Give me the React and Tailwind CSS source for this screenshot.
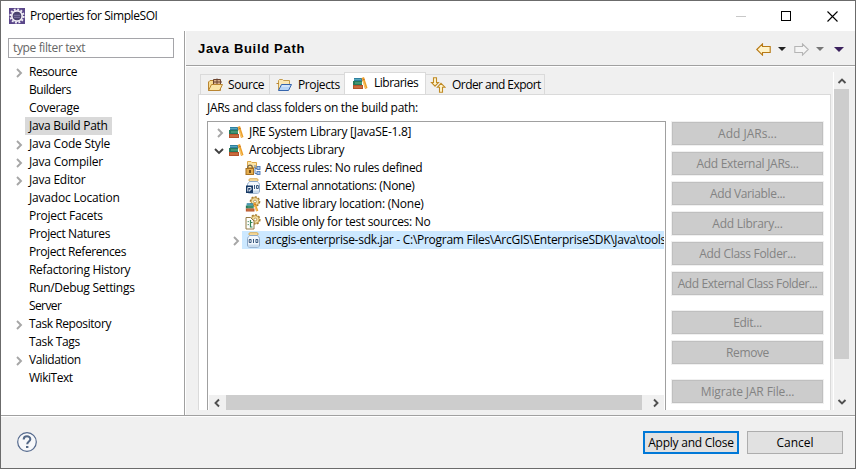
import React from "react";

const TREE = [
  { label: "Resource", open: true, fit: "tracking-[-0.48px]" },
  { label: "Builders", fit: "tracking-[-0.48px]" },
  { label: "Coverage", fit: "tracking-[-0.28px]" },
  { label: "Java Build Path", selected: true, fit: "tracking-[-0.28px]" },
  { label: "Java Code Style", open: true, fit: "tracking-[-0.22px]" },
  { label: "Java Compiler", open: true, fit: "tracking-[-0.2px]" },
  { label: "Java Editor", open: true, fit: "tracking-[-0.25px]" },
  { label: "Javadoc Location", fit: "tracking-[-0.2px]" },
  { label: "Project Facets", fit: "tracking-[-0.28px]" },
  { label: "Project Natures", fit: "tracking-[-0.4px]" },
  { label: "Project References", fit: "tracking-[-0.41px]" },
  { label: "Refactoring History", fit: "tracking-[-0.3px]" },
  { label: "Run/Debug Settings", fit: "tracking-[-0.29px]" },
  { label: "Server", fit: "tracking-[-0.6px]" },
  { label: "Task Repository", open: true, fit: "tracking-[-0.42px]" },
  { label: "Task Tags", fit: "tracking-[-0.35px]" },
  { label: "Validation", open: true, fit: "tracking-[-0.4px]" },
  { label: "WikiText", fit: "tracking-[-0.48px]" },
];

function Chevron({ className = "", d = "M2 1 L6 5 L2 9", color = "#a6a6a6", w = 8, h = 10 }) {
  return (
    <svg className={"shrink-0 " + className} width={w} height={h} viewBox={`0 0 ${w} ${h}`} fill="none" stroke={color} strokeWidth="1.9">
      <path d={d} />
    </svg>
  );
}

function Svg16({ children, className = "" }) {
  return (
    <svg className={"shrink-0 " + className} width="16" height="16" viewBox="0 0 16 16">
      {children}
    </svg>
  );
}

function BooksShapes() {
  return (
    <>
      <rect x="2" y="3" width="8" height="3" fill="#2f7f9f" />
      <path d="M2 4.5H9" stroke="#57a9bd" />
      <rect x="1" y="6" width="9" height="4" fill="#267a5c" />
      <path d="M3 8H10" stroke="#62b28b" />
      <rect x="1" y="10" width="10" height="4" fill="#b6522b" />
      <path d="M2 12H10" stroke="#dc8751" />
      <path d="M9.5 3L12 2L15.5 13L13 14Z" fill="#eea02c" />
      <path d="M10.5 4L13.5 13" stroke="#fbd580" strokeWidth=".8" />
      <path d="M10.2 5.2L12.7 4.3" stroke="#c36c1b" />
    </>
  );
}

function BooksIcon({ className }) {
  return <Svg16 className={className}><BooksShapes /></Svg16>;
}

function SourceIcon() {
  return (
    <Svg16>
      <path d="M1.5 13.5V5L3 3.5H6.5L8 5H13.5V13.5Z" fill="#f8dc93" stroke="#b98531" />
      <path d="M6.5 2.5H13.5V7.5H6.5Z" fill="#d9b28e" stroke="#6c4530" />
      <path d="M10 1.5V8M6 5H15" stroke="#6c4530" />
      <path d="M1.5 13.5L4.5 7.5H15.5L12.5 13.5Z" fill="#fbe5a8" stroke="#b98531" />
    </Svg16>
  );
}

function ProjectsIcon() {
  return (
    <Svg16>
      <path d="M2.5 13V3.5L3.5 2.5H6.5L7.5 3.5H13.5V8" fill="#fbe8b5" stroke="#c49c4c" />
      <path d="M.5 6.5H3" stroke="#b98531" />
      <path d="M2.5 13.5L5.5 7.5H15.5L12.5 13.5Z" fill="#b7d5f7" stroke="#3565ad" />
      <path d="M6 9H13.5" stroke="#e9f4ff" />
    </Svg16>
  );
}

function OrderIcon() {
  return (
    <Svg16>
      <path d="M3.5 .8H6.5V5.5H8.5L5 9.2L1.5 5.5H3.5Z" fill="#fff5d0" stroke="#c08a25" strokeWidth="1.1" />
      <path d="M9.5 15.2H12.5V10.2H15L11 6.3L7.4 10.2H9.5Z" fill="#fff5d0" stroke="#c08a25" strokeWidth="1.1" />
    </Svg16>
  );
}

function GearShape({ cx, cy }) {
  return (
    <>
      <circle cx={cx} cy={cy} r="4.5" fill="#ecd28b" stroke="#a47b2e" strokeWidth="1.6" strokeDasharray="2 1.4" />
      <circle cx={cx} cy={cy} r="3.8" fill="#f4e0a6" stroke="#b58b3d" strokeWidth=".7" />
      <circle cx={cx} cy={cy} r="1.4" fill="#fff" stroke="#a47b2e" strokeWidth=".7" />
    </>
  );
}

function AccessIcon() {
  return (
    <Svg16>
      <path d="M2.5 1.5H6L7 2.5H11.5V7.5H2.5Z" fill="#fce5a6" stroke="#dca84b" />
      <path d="M10 5V13.5H12M10 8.5H12" fill="none" stroke="#5c7fae" />
      <rect x="12" y="6.5" width="3" height="3" fill="#a9c8ef" stroke="#4f79b5" strokeWidth=".9" />
      <rect x="12" y="11.5" width="3" height="3" fill="#a9c8ef" stroke="#4f79b5" strokeWidth=".9" />
      <path d="M2.7 9V7.5C2.7 4.2 7.3 4.2 7.3 7.5V9" fill="none" stroke="#7c6847" strokeWidth="1.3" />
      <rect x="1" y="8.5" width="7.5" height="6" fill="#e3ad4f" stroke="#a8701f" />
      <rect x="4" y="10" width="2" height="3" fill="#76501e" />
    </Svg16>
  );
}

function JarShapes() {
  return (
    <>
      <rect x="4" y=".8" width="9" height="2.5" rx="1" fill="#fbe5ae" stroke="#d8a64b" />
      <path d="M4.5 3.5H12.5C13 5 14.5 5 14.5 6.5V13C14.5 14.5 13.5 15.3 12.5 15.3H4.5C3.5 15.3 2.5 14.5 2.5 13V6.5C2.5 5 4 5 4.5 3.5Z" fill="#f1f7fd" stroke="#8da9c8" />
      <path d="M3 12.5H14V14L12.5 15H4.5L3 14Z" fill="#c8dbed" />
    </>
  );
}

function JarIcon() {
  return (
    <Svg16>
      <JarShapes />
      <path d="M4.2 7.5H6.1V10.5H4.2ZM10.9 7.5H12.8V10.5H10.9ZM8.5 7V11" fill="none" stroke="#24466f" strokeWidth=".9" />
    </Svg16>
  );
}

function AnnotationIcon() {
  return (
    <Svg16>
      <JarShapes />
      <path d="M9.5 7V11M11.5 7.5H13.3V10.5H11.5Z" fill="none" stroke="#24466f" strokeWidth=".9" />
      <rect x="1" y="7.5" width="7" height="7.5" fill="#163965" />
      <path d="M2.8 13.5V9.5H6V12H4.3V13.5" fill="none" stroke="#fff" strokeWidth=".9" />
    </Svg16>
  );
}

function NativeIcon() {
  return (
    <Svg16>
      <GearShape cx={10} cy={5.5} />
      <g transform="translate(0 5) scale(.86 .75)"><BooksShapes /></g>
    </Svg16>
  );
}

function TestIcon() {
  return (
    <Svg16>
      <GearShape cx={10.3} cy={5.5} />
      <path d="M1 3.5H5.5L9 7V15H1Z" fill="#fff" stroke="#927b45" />
      <path d="M5.5 6V13H7.5M5.5 8.5H7.5" fill="none" stroke="#328351" strokeWidth="1.2" />
      <path d="M3.2 7V8.2M3.2 10V11.2" stroke="#328351" />
    </Svg16>
  );
}

function EclipseIcon() {
  return (
    <svg className="shrink-0" width="16" height="16" viewBox="0 0 16 16">
      <rect width="16" height="16" fill="#5b478a" />
      <circle cx="8" cy="8" r="6.6" fill="none" stroke="#f1eef6" strokeWidth="2" strokeDasharray="1.9 1.556" />
      <circle cx="8" cy="8" r="5.2" fill="#40345e" stroke="#f0edf5" strokeWidth="1.7" />
      <circle cx="8" cy="8" r="4" fill="#4b4470" />
      <path d="M4.8 7.3H11.2M5 9.3H11" stroke="#8f86b4" strokeWidth=".8" />
    </svg>
  );
}

function Triangle({ color }) {
  return <svg className="shrink-0" width="8" height="4" viewBox="0 0 8 4"><path d="M0 0H8L4 4Z" fill={color} /></svg>;
}

function NavArrow({ color, fill, flip }) {
  return (
    <svg className={"shrink-0 " + (flip ? "-scale-x-100" : "")} width="15" height="13" viewBox="0 0 15 13">
      <path d="M.8 6.5L6.5 .9V3.5H14.2V9.5H6.5V12.1Z" fill={fill} stroke={color} strokeWidth="1.1" />
    </svg>
  );
}

function TitleBar() {
  return (
    <div className="flex h-[30px] shrink-0 items-center bg-white pl-2">
      <EclipseIcon />
      <span className="ml-[5px] tracking-[-0.42px]">Properties for SimpleSOI</span>
      <div className="ml-auto flex h-full items-center pr-[17px]">
        <div className="h-px w-[10px] bg-[#c8c8c8]" />
        <div className="ml-[35px] h-[10px] w-[10px] border border-black" />
        <svg className="ml-9" width="11" height="11" viewBox="0 0 11 11" stroke="#000" strokeWidth="1.1"><path d="M.5 .5L10.5 10.5M10.5 .5L.5 10.5" /></svg>
      </div>
    </div>
  );
}

function Sidebar() {
  return (
    <div className="flex w-[184px] shrink-0 flex-col border-r border-[#a0a0a0] bg-white pl-[7px] pt-[7px]">
      <div className="flex h-5 w-[166px] shrink-0 items-center border border-[#a5a5a9] pl-1 text-[#666]">
        <span className="tracking-[-0.37px]">type filter text</span>
      </div>
      <div className="flex flex-col pt-[5px]">
        {TREE.map((n) => (
          <div key={n.label} className="flex h-[18px] items-center">
            <div className="w-[17px] pl-[7px] pt-0.5">{n.open && <Chevron />}</div>
            <span className={"flex h-[18px] items-center whitespace-nowrap px-1 " + n.fit + (n.selected ? " bg-[#d9d9d9]" : "")}>{n.label}</span>
          </div>
        ))}
      </div>
    </div>
  );
}

function Header() {
  return (
    <div className="flex h-[35px] shrink-0 items-center border-b border-[#a0a0a0] pl-3 pr-[11px] pt-[2px]">
      <h1 className="font-['Liberation_Sans'] text-[13px] font-bold tracking-[0.68px]">Java Build Path</h1>
      <div className="ml-auto flex items-center">
        <NavArrow color="#b87a16" fill="#fff3c9" />
        <div className="w-[7px]" />
        <Triangle color="#222" />
        <div className="w-2" />
        <NavArrow color="#b5b5b5" fill="#f5f5f5" flip />
        <div className="w-[7px]" />
        <Triangle color="#777" />
        <div className="w-[10px]" />
        <svg width="10" height="5" viewBox="0 0 10 5"><path d="M0 0H10L5 5Z" fill="#3b215d" /></svg>
      </div>
    </div>
  );
}

function Tab({ icon, label, className }) {
  return (
    <div className={"flex h-5 shrink-0 items-center whitespace-nowrap border-t border-[#dadada] " + className}>
      {icon}
      {label}
    </div>
  );
}

function Tabs() {
  return (
    <div className="flex h-[22px] shrink-0 items-end pl-[2px]">
      <Tab icon={<SourceIcon />} className="w-[70px] gap-[5px] border-x pl-1.5 tracking-[-0.4px]" label="Source" />
      <Tab icon={<ProjectsIcon />} className="w-[74px] gap-[6px] pl-1.5 tracking-[-0.38px]" label="Projects" />
      <div className="-mb-px flex h-[23px] w-[82px] shrink-0 items-center gap-[6px] border border-b-0 border-[#dadada] bg-white pb-[2px] pl-[7px] tracking-[-0.5px]">
        <BooksIcon />
        Libraries
      </div>
      <Tab icon={<OrderIcon />} className="w-[119px] gap-[6px] border-r pl-1 tracking-[-0.55px]" label="Order and Export" />
    </div>
  );
}

const CHILDREN = [
  { icon: <AccessIcon />, label: "Access rules: No rules defined", fit: "tracking-[-0.33px]" },
  { icon: <AnnotationIcon />, label: "External annotations: (None)", fit: "tracking-[-0.37px]" },
  { icon: <NativeIcon />, label: "Native library location: (None)", fit: "tracking-[-0.24px]" },
  { icon: <TestIcon />, label: "Visible only for test sources: No", fit: "tracking-[-0.3px]" },
];

function LibraryTree() {
  return (
    <div className="flex h-[289px] w-[459px] shrink-0 flex-col border-x border-t border-[#a0a0a0] bg-white px-px pt-px">
      <div className="flex h-[18px] items-center pl-[7px]">
        <Chevron className="mt-0.5" />
        <BooksIcon className="ml-1" />
        <span className="ml-[5px] tracking-[-0.27px]">JRE System Library [JavaSE-1.8]</span>
      </div>
      <div className="flex h-[18px] items-center pl-[5px]">
        <Chevron className="mt-px" d="M1 2 L5 6 L9 2" color="#404040" w={10} h={8} />
        <BooksIcon className="ml-1" />
        <span className="ml-[5px] tracking-[-0.3px]">Arcobjects Library</span>
      </div>
      {CHILDREN.map((c) => (
        <div key={c.label} className="flex h-[18px] items-center gap-1 whitespace-nowrap pl-9">
          {c.icon}
          <span className={c.fit}>{c.label}</span>
        </div>
      ))}
      <div className="flex h-[18px] items-center pl-[23px]">
        <Chevron className="mt-0.5" />
        <div className="ml-[2px] flex h-[18px] min-w-0 flex-1 items-center gap-1 overflow-hidden whitespace-nowrap bg-[#cce8ff] pl-[3px]">
          <JarIcon />
          <span className="tracking-[-0.27px]">arcgis-enterprise-sdk.jar - C:\Program Files\ArcGIS\EnterpriseSDK\Java\tools</span>
        </div>
      </div>
      <div className="mt-auto flex h-[15px] items-center bg-[#f0f0f0] pl-1 pr-[4px]">
        <Chevron d="M6 1.5 L2.5 5 L6 8.5" color="#505050" />
        <div className="ml-[5px] mr-auto h-[15px] w-[416px] bg-[#cdcdcd]" />
        <Chevron d="M2 1.5 L5.5 5 L2 8.5" color="#505050" />
      </div>
    </div>
  );
}

function SideButton({ label, className = "" }) {
  return (
    <div className={"flex h-[25px] w-[153px] shrink-0 border border-[#f0f0f0] " + className}>
      <div className="flex flex-1 items-center justify-center whitespace-nowrap border border-[#bfbfbf] bg-[#ccc] text-[#838383]">{label}</div>
    </div>
  );
}

function Page() {
  return (
    <div className="flex h-[338px] w-[633px] shrink-0 flex-col overflow-hidden">
      <Tabs />
      <div className="flex min-h-0 flex-1 flex-col border-x border-t border-[#dadada] bg-white pl-2">
        <div className="flex h-[26px] shrink-0 items-center tracking-[-0.29px]">JARs and class folders on the build path:</div>
        <div className="flex gap-[5px]">
          <LibraryTree />
          <div className="flex flex-col gap-[5px]">
            <SideButton label="Add JARs..." />
            <SideButton label="Add External JARs..." className="tracking-[-0.28px]" />
            <SideButton label="Add Variable..." className="tracking-[-0.35px]" />
            <SideButton label="Add Library..." className="tracking-[-0.26px]" />
            <SideButton label="Add Class Folder..." className="tracking-[-0.29px]" />
            <SideButton label="Add External Class Folder..." className="tracking-[-0.41px]" />
            <SideButton label="Edit..." className="mt-[9px] tracking-[-0.3px]" />
            <SideButton label="Remove" className="tracking-[-0.4px]" />
            <SideButton label="Migrate JAR File..." className="mt-[9px] tracking-[-0.12px]" />
          </div>
        </div>
      </div>
    </div>
  );
}

function PageScrollbar() {
  return (
    <div className="ml-0.5 flex h-[338px] w-[16px] shrink-0 flex-col items-center border-l border-white">
      <div className="flex h-[17px] items-center"><Chevron d="M1.5 6 L5 2.5 L8.5 6" color="#505050" w={10} h={8} /></div>
      <div className="h-[270px] w-full bg-[#cdcdcd]" />
      <div className="mt-auto flex h-[17px] items-center"><Chevron d="M1.5 2 L5 5.5 L8.5 2" color="#505050" w={10} h={8} /></div>
    </div>
  );
}

function Footer() {
  return (
    <div className="flex h-[53px] shrink-0 items-center border-t border-[#a0a0a0] pl-4 pr-3 shadow-[inset_0_1px_0_#fff]">
      <svg width="20" height="20" viewBox="0 0 20 20" fill="none">
        <circle cx="10" cy="10" r="9.3" fill="#f7f8fa" stroke="#54698d" strokeWidth="1.2" />
        <path d="M6.7 7.6C6.7 3.2 13.3 3.4 13.3 7.2C13.3 9.6 10.2 9.4 10.2 12.3" stroke="#536887" strokeWidth="2.1" />
        <path d="M9 14H11.4V16H9Z" fill="#536887" />
      </svg>
      <div className="ml-auto flex gap-2">
        <button className="h-[23px] w-24 whitespace-nowrap border-2 border-[#0078d7] bg-[#e1e1e1] pt-px leading-none tracking-[-0.25px]">Apply and Close</button>
        <button className="h-[23px] w-24 border border-[#adadad] bg-[#e1e1e1] pt-px leading-none">Cancel</button>
      </div>
    </div>
  );
}

export default function App() {
  return (
    <div className="flex h-[469px] w-[856px] flex-col overflow-hidden border border-[#6b6b6b] bg-[#f0f0f0] font-['Open_Sans','Noto_Sans',sans-serif] text-[12px] leading-[18px] text-black">
      <TitleBar />
      <div className="flex h-[384px] shrink-0">
        <Sidebar />
        <div className="flex min-w-0 flex-1 flex-col border-l border-white">
          <Header />
          <div className="flex border-t border-white pl-3 pt-[5px]">
            <Page />
            <PageScrollbar />
          </div>
        </div>
      </div>
      <Footer />
    </div>
  );
}
